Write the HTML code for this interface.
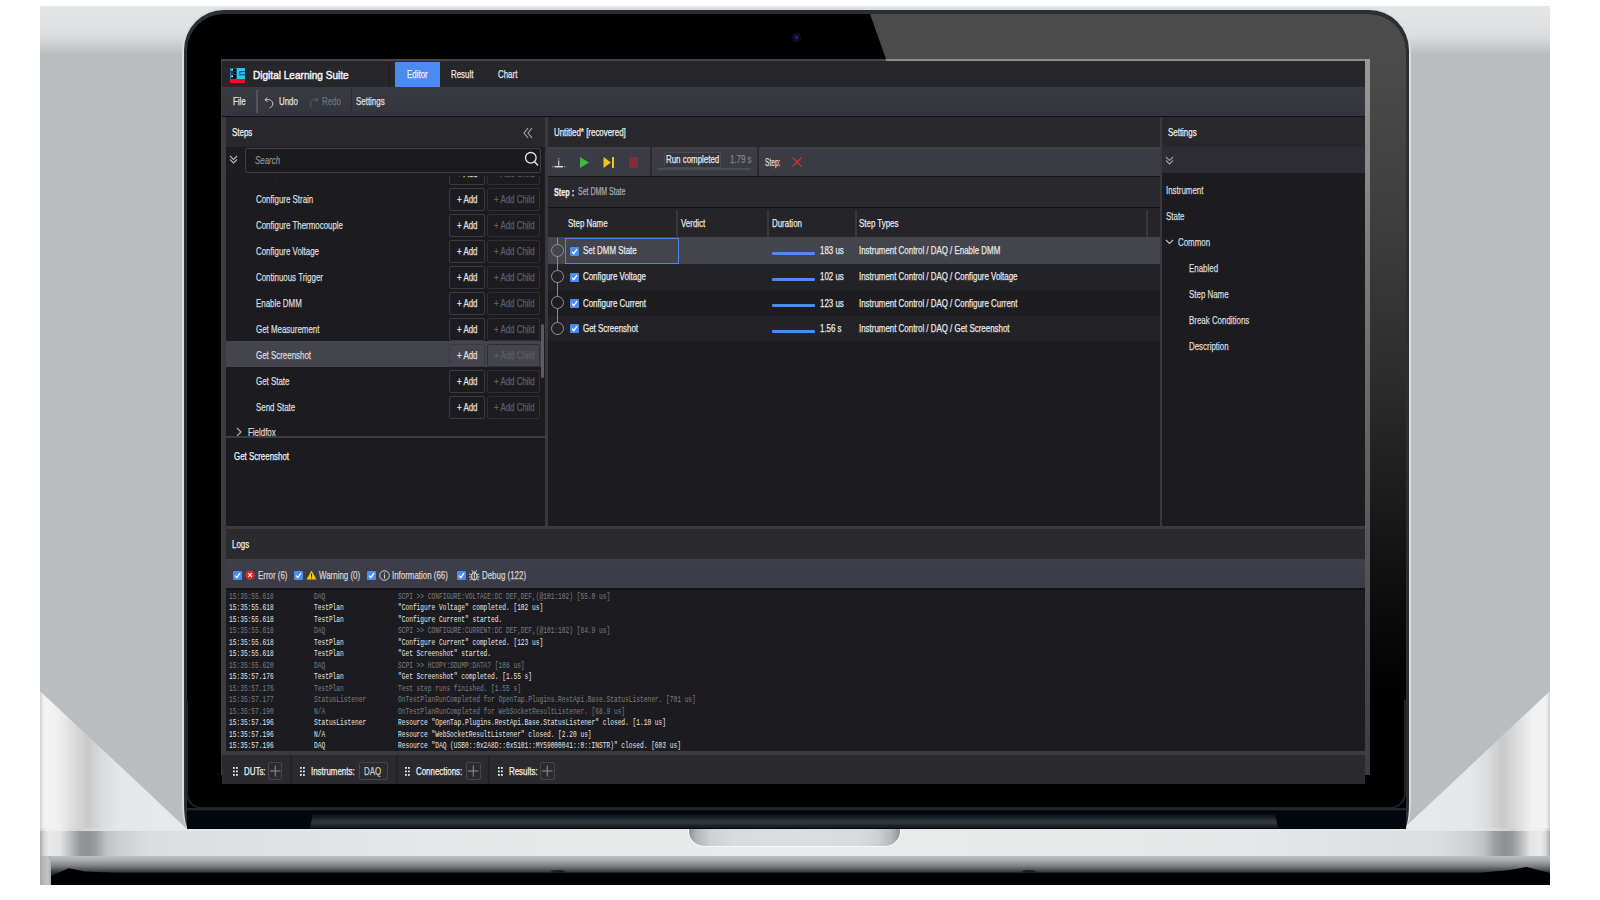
<!DOCTYPE html>
<html><head><meta charset="utf-8">
<style>
*{box-sizing:border-box;margin:0;padding:0}
html,body{width:1600px;height:900px;overflow:hidden;background:#fff;font-family:"Liberation Sans",sans-serif}
.a{position:absolute}
#bg{left:40px;top:6px;width:1510px;height:879px;background:linear-gradient(to bottom,#e4e5e5 0px,#e1e2e3 16px,#dcddde 30px,#c9cbcd 40px,#babdbf 48px,#babdbf 100%)}
#triL{left:40px;top:691px;width:147px;height:138px;clip-path:polygon(0 0,100% 100%,0 100%);background:linear-gradient(to right,#cfd0d1 0px,#f3f3f3 4px,#f0f0f0 18px,#d6d6d7 38px,#c9c9ca 48px,#dadbdc 62px,#e6e7e8 80px,#e8e9ea 100%)}
#triR{left:1403px;top:691px;width:147px;height:138px;clip-path:polygon(100% 0,100% 100%,0 100%);background:linear-gradient(to left,#cfd0d1 0px,#f3f3f3 4px,#f0f0f0 18px,#d6d6d7 38px,#c9c9ca 48px,#dadbdc 62px,#e6e7e8 80px,#e8e9ea 100%)}
#base{left:40px;top:830.5px;width:1510px;height:25.5px;background:linear-gradient(to right,#a6a8aa 0px,#d6d7d8 4px,#e9e9ea 9px,#e4e4e5 20px,#bdbfc1 30px,#949698 40px,#8e9092 47px,#9b9d9f 56px,#bfc1c3 66px,#cdcfd1 80px,#dcdddf 110px,#e6e7e8 400px,#eaebeb 800px,#e6e7e8 1200px,#dcdddf 1400px,#cdcfd1 1430px,#bfc1c3 1444px,#9b9d9f 1456px,#8e9092 1465px,#949698 1472px,#bdbfc1 1482px,#e4e4e5 1490px,#e9e9ea 1501px,#d6d7d8 1506px,#a6a8aa 1510px)}
#baseTop{left:40px;top:828px;width:1510px;height:2.5px;background:linear-gradient(to right,#c8c9ca 0px,#eeeeee 6px,#efefef 20px,#d0d0d1 38px,#e2e3e4 70px,#e6e7e8 100px,#e6e7e8 1410px,#e2e3e4 1440px,#d0d0d1 1472px,#efefef 1490px,#eeeeee 1504px,#c8c9ca 1510px)}
#base2{left:40px;top:856px;width:1510px;height:29px;background:linear-gradient(to bottom,#bfc1c3 0px,#a5a8aa 5px,#7d8083 10px,#4f5255 14px,#2a2c2e 17px,#1a1b1c 100%)}
#bstrip{left:40px;top:856px;width:11px;height:29px;background:linear-gradient(to right,#a4a6a8 0px,#b4b6b8 3px,#c2c4c6 8px,#a9abad 11px)}
#bblack{left:40px;top:856px;width:1510px;height:29px;background:#000;clip-path:polygon(11px 29px,11px 20px,28.7px 12.2px,45px 15.5px,76px 16.8px,1440px 16.8px,1470px 14px,1486.5px 11px,1510px 17px,1510px 29px)}
#notch{left:689px;top:828.5px;width:211px;height:17px;border-radius:0 0 15px 15px;background:linear-gradient(to right,#8f9194 0px,#b4b6b8 8px,#cfd0d2 22px,#dadbdd 45px,#dcdddf 50%,#dadbdd calc(100% - 45px),#cfd0d2 calc(100% - 22px),#b4b6b8 calc(100% - 8px),#8f9194 100%);box-shadow:0 1px 0 #f7f7f7,1px 0 0 #f7f7f7,-1px 0 0 #f7f7f7}
#lidEdge{left:182px;top:8px;width:1229px;height:821px;border-radius:42px 42px 7px 7px/42px 42px 28px 28px;background:#d9dde0}
#lidRing{left:184px;top:10px;width:1225px;height:819px;border-radius:40px 40px 5px 5px/40px 40px 26px 26px;background:#2b2f33}
#lid{left:187px;top:14px;width:1219px;height:815px;border-radius:37px 37px 3px 3px/37px 37px 24px 24px;background:#000;overflow:hidden}
#glare{left:683px;top:0px;width:540px;height:45px;clip-path:polygon(0 0,100% 0,100% 100%,16px 100%);background:#4b4b4b}
#rbez{left:1182px;top:45px;width:37px;height:640px;background:linear-gradient(to bottom,#4b4b4b 0%,#3e3e3e 25%,#2c2c2c 50%,#1c1c1c 68%,#0c0c0c 85%,#000 100%)}
#hinge{left:187px;top:808px;width:1219px;height:20.5px;background:linear-gradient(to bottom,#22262c 0px,#22262c 1.5px,#03070e 3px,#02060d 100%)}
#hingeRing{left:186px;top:700px;width:1220px;height:109px;border:2px solid #1e2226;border-top:none;border-radius:0 0 16px 16px}
#hingeIn{left:310px;top:814px;width:968px;height:14px;background:linear-gradient(to bottom,#060b12 0px,#1c2127 4px,#2f3439 7px,#32373c 9px,#22262c 11px,#12161c 14px);clip-path:polygon(3px 0,calc(100% - 3px) 0,100% 100%,0 100%)}
#cam{left:791px;top:32px;width:11px;height:11px;border-radius:50%;background:radial-gradient(circle,#1530b0 0,#0c2080 1.3px,#060a1c 2.5px,#0c0f15 4px,#000 5.5px)}

.t{position:absolute;white-space:pre;font-size:11px;color:#d9d9dc;transform-origin:0 50%;transform:scaleX(.72);-webkit-text-stroke:0.25px currentColor}
.r{position:absolute}
.m{position:absolute;white-space:pre;font-family:"Liberation Mono",monospace;font-size:9.5px;line-height:11.5px;transform-origin:0 50%;transform:scaleX(.653);color:#e6e6e6}
.dm{color:#7c7c80}
.btn{position:absolute;border:1px solid #3b3b40;border-radius:2px;background:#1d1d20}
.cb{position:absolute;width:9px;height:9px;background:#4a8cf2;border-radius:1px}
.cb:after{content:"";position:absolute;left:2.5px;top:0.5px;width:2.5px;height:5px;border:solid #fff;border-width:0 1.5px 1.5px 0;transform:rotate(40deg)}
</style></head><body>
<div id="bg" class="a"></div>
<div id="triL" class="a"></div>
<div id="triR" class="a"></div>
<div id="base2" class="a"></div><div id="bstrip" class="a"></div><div id="bblack" class="a"></div><div id="baseTop" class="a"></div><div class="a" style="left:551px;top:869.5px;width:14px;height:3px;border-radius:50%;background:#1a1b1d"></div><div class="a" style="left:1022px;top:869.5px;width:14px;height:3px;border-radius:50%;background:#1a1b1d"></div>
<div id="base" class="a"></div>
<div id="notch" class="a"></div>
<div id="lidEdge" class="a"></div>
<div id="lidRing" class="a"></div>
<div id="lid" class="a"><div id="glare" class="a"></div><div id="rbez" class="a"></div></div>
<div id="hingeRing" class="a"></div>
<div id="hinge" class="a"></div>
<div id="hingeIn" class="a"></div>
<div id="cam" class="a"></div>
<div class="r" style="left:221px;top:59px;width:1148px;height:716px;background:#1c1c20"></div>
<div class="r" style="left:221px;top:59px;width:665px;height:2.5px;background:#48484b"></div>
<div class="r" style="left:886px;top:59px;width:483px;height:2.5px;background:#8e8e8e"></div>
<div class="r" style="left:1365px;top:59px;width:4.5px;height:716px;background:linear-gradient(to bottom,#9a9a9a 0%,#7a7a7a 30%,#555557 70%,#3c3c3e 100%)"></div>
<div class="r" style="left:221px;top:61px;width:1.5px;height:714px;background:#3c3c40"></div>
<div class="r" style="left:222px;top:61px;width:1143px;height:26px;background:#26262b"></div>
<svg class="r" style="left:230px;top:68px" width="15" height="15" viewBox="0 0 15 15"><rect x="0" y="0" width="15" height="11" fill="#1da6d6"/><rect x="0.8" y="0.5" width="5.7" height="10.3" fill="#020a0e"/><rect x="0.8" y="3.2" width="5.7" height="0.6" fill="#0e6a88"/><rect x="0.8" y="6.3" width="5.7" height="0.6" fill="#0e6a88"/><rect x="1.2" y="1" width="1.8" height="1.5" fill="#f0f0f0"/><rect x="1.2" y="4.4" width="2.4" height="1.3" fill="#6a5a50"/><rect x="1.2" y="7.5" width="1.8" height="1.6" fill="#f0f0f0"/><rect x="7" y="0.3" width="8" height="10.7" fill="#28c8f5"/><rect x="9.6" y="3" width="5.4" height="1.2" fill="#0a5d7c"/><rect x="9.6" y="6.1" width="5.4" height="1.2" fill="#0a5d7c"/><rect x="9.3" y="3" width="1" height="4.3" fill="#0a5d7c"/><rect x="0" y="11" width="15" height="4" fill="#ff0628"/></svg>
<div class="t" style="left:253px;top:62px;height:26px;line-height:26px;font-size:11.5px;color:#f4f4f6;transform:scaleX(0.875);-webkit-text-stroke:0.45px #f4f4f6">Digital Learning Suite</div>
<div class="r" style="left:389px;top:62px;width:1px;height:25px;background:#1d1d21"></div>
<div class="r" style="left:395px;top:62px;width:45px;height:25px;background:#4a8af2"></div>
<div class="t" style="left:407px;top:61px;height:26px;line-height:26px;color:#eaf2ff;">Editor</div>
<div class="t" style="left:451px;top:61px;height:26px;line-height:26px;color:#e6e6e8;">Result</div>
<div class="t" style="left:497.5px;top:61px;height:26px;line-height:26px;color:#e6e6e8;">Chart</div>
<div class="r" style="left:222px;top:87px;width:1143px;height:29px;background:linear-gradient(to bottom,#3a3b42,#34353c)"></div>
<div class="r" style="left:222px;top:115.5px;width:1143px;height:1.5px;background:#131316"></div>
<div class="t" style="left:233px;top:87px;height:28px;line-height:28px;color:#e0e0e2;">File</div>
<div class="r" style="left:256px;top:90px;width:1.6px;height:23px;background:#55555b"></div>
<svg class="r" style="left:264px;top:96px" width="11" height="13" viewBox="0 0 11 13"><path d="M3 1.5 L1 4 L3.6 5.6 M1.2 4 C5 2.5 9 4.5 8.8 8 C8.6 10.2 7 11.5 5.5 12" stroke="#c8c8cc" stroke-width="1" fill="none"/></svg>
<div class="t" style="left:278.5px;top:87px;height:28px;line-height:28px;color:#e0e0e2;">Undo</div>
<svg class="r" style="left:308px;top:96px" width="11" height="13" viewBox="0 0 11 13"><path d="M8 1.5 L10 4 L7.4 5.6 M9.8 4 C6 2.5 2 4.5 2.2 8 C2.4 10.2 3 11.5 4.5 12" stroke="#5c5c62" stroke-width="1" fill="none"/></svg>
<div class="t" style="left:322px;top:87px;height:28px;line-height:28px;color:#707076;">Redo</div>
<div class="r" style="left:351px;top:88px;width:1px;height:27px;background:#2c2c32"></div>
<div class="t" style="left:356px;top:87px;height:28px;line-height:28px;color:#e0e0e2;">Settings</div>
<div class="r" style="left:222px;top:117px;width:4px;height:409px;background:#3d3d41"></div>
<div class="r" style="left:226px;top:117px;width:319px;height:30px;background:#27272c"></div>
<div class="t" style="left:232px;top:117px;height:30px;line-height:30px;color:#f2f2f4;">Steps</div>
<svg class="r" style="left:522px;top:127px" width="12" height="12" viewBox="0 0 12 12"><path d="M6 1 L2 6 L6 11 M10 1 L6 6 L10 11" stroke="#a8a8ae" stroke-width="1.1" fill="none"/></svg>
<div class="r" style="left:226px;top:147px;width:319px;height:28.5px;background:#1d1d21"></div>
<svg class="r" style="left:229px;top:155px" width="9" height="9" viewBox="0 0 9 9"><path d="M1 1 L4.5 4.5 L8 1 M1 4.5 L4.5 8 L8 4.5" stroke="#b8b8bc" stroke-width="1.1" fill="none"/></svg>
<div class="r" style="left:245px;top:147.5px;width:296px;height:25.5px;border:1px solid #3e3e44;border-radius:2px;background:#1b1b1e"></div>
<div class="t" style="left:255px;top:147.5px;height:25.5px;line-height:25.5px;color:#8c8c92;font-style:italic">Search</div>
<svg class="r" style="left:524px;top:151px" width="15" height="16" viewBox="0 0 15 16"><circle cx="6.8" cy="6.8" r="5.3" stroke="#e6e6e8" stroke-width="1.3" fill="none"/><path d="M10.7 10.8 L14 14.5" stroke="#e6e6e8" stroke-width="1.4"/></svg>
<div class="r" style="left:226px;top:175.5px;width:319px;height:260.5px;overflow:hidden">
<div class="r" style="left:0;top:3px;width:200px;height:10px;overflow:hidden">
<div class="t" style="left:30px;top:-19.0px;height:26px;line-height:26px;color:#dadadd;">Configure Shunt</div>
</div>
<div class="r" style="left:223px;top:-14.0px;width:36px;height:23px;border:1px solid #3a3a3f;border-radius:2px"></div>
<div class="r" style="left:261px;top:-14.0px;width:52.5px;height:23px;border:1px solid #2e2e33;border-radius:2px"></div>
<div class="t" style="left:231px;top:-14.0px;height:23px;line-height:23px;color:#e0e0e2;">+ Add</div>
<div class="t" style="left:267.5px;top:-14.0px;height:23px;line-height:23px;color:#5f5f65;">+ Add Child</div>
<div class="t" style="left:30px;top:10.0px;height:26px;line-height:26px;color:#dadadd;">Configure Strain</div>
<div class="r" style="left:223px;top:12.0px;width:36px;height:23px;border:1px solid #3a3a3f;border-radius:2px"></div>
<div class="r" style="left:261px;top:12.0px;width:52.5px;height:23px;border:1px solid #2e2e33;border-radius:2px"></div>
<div class="t" style="left:231px;top:12.0px;height:23px;line-height:23px;color:#e0e0e2;">+ Add</div>
<div class="t" style="left:267.5px;top:12.0px;height:23px;line-height:23px;color:#5f5f65;">+ Add Child</div>
<div class="t" style="left:30px;top:36.0px;height:26px;line-height:26px;color:#dadadd;">Configure Thermocouple</div>
<div class="r" style="left:223px;top:38.0px;width:36px;height:23px;border:1px solid #3a3a3f;border-radius:2px"></div>
<div class="r" style="left:261px;top:38.0px;width:52.5px;height:23px;border:1px solid #2e2e33;border-radius:2px"></div>
<div class="t" style="left:231px;top:38.0px;height:23px;line-height:23px;color:#e0e0e2;">+ Add</div>
<div class="t" style="left:267.5px;top:38.0px;height:23px;line-height:23px;color:#5f5f65;">+ Add Child</div>
<div class="t" style="left:30px;top:62.0px;height:26px;line-height:26px;color:#dadadd;">Configure Voltage</div>
<div class="r" style="left:223px;top:64.0px;width:36px;height:23px;border:1px solid #3a3a3f;border-radius:2px"></div>
<div class="r" style="left:261px;top:64.0px;width:52.5px;height:23px;border:1px solid #2e2e33;border-radius:2px"></div>
<div class="t" style="left:231px;top:64.0px;height:23px;line-height:23px;color:#e0e0e2;">+ Add</div>
<div class="t" style="left:267.5px;top:64.0px;height:23px;line-height:23px;color:#5f5f65;">+ Add Child</div>
<div class="t" style="left:30px;top:88.0px;height:26px;line-height:26px;color:#dadadd;">Continuous Trigger</div>
<div class="r" style="left:223px;top:90.0px;width:36px;height:23px;border:1px solid #3a3a3f;border-radius:2px"></div>
<div class="r" style="left:261px;top:90.0px;width:52.5px;height:23px;border:1px solid #2e2e33;border-radius:2px"></div>
<div class="t" style="left:231px;top:90.0px;height:23px;line-height:23px;color:#e0e0e2;">+ Add</div>
<div class="t" style="left:267.5px;top:90.0px;height:23px;line-height:23px;color:#5f5f65;">+ Add Child</div>
<div class="t" style="left:30px;top:114.0px;height:26px;line-height:26px;color:#dadadd;">Enable DMM</div>
<div class="r" style="left:223px;top:116.0px;width:36px;height:23px;border:1px solid #3a3a3f;border-radius:2px"></div>
<div class="r" style="left:261px;top:116.0px;width:52.5px;height:23px;border:1px solid #2e2e33;border-radius:2px"></div>
<div class="t" style="left:231px;top:116.0px;height:23px;line-height:23px;color:#e0e0e2;">+ Add</div>
<div class="t" style="left:267.5px;top:116.0px;height:23px;line-height:23px;color:#5f5f65;">+ Add Child</div>
<div class="t" style="left:30px;top:140.0px;height:26px;line-height:26px;color:#dadadd;">Get Measurement</div>
<div class="r" style="left:223px;top:142.0px;width:36px;height:23px;border:1px solid #3a3a3f;border-radius:2px"></div>
<div class="r" style="left:261px;top:142.0px;width:52.5px;height:23px;border:1px solid #2e2e33;border-radius:2px"></div>
<div class="t" style="left:231px;top:142.0px;height:23px;line-height:23px;color:#e0e0e2;">+ Add</div>
<div class="t" style="left:267.5px;top:142.0px;height:23px;line-height:23px;color:#5f5f65;">+ Add Child</div>
<div class="r" style="left:0px;top:165.5px;width:315px;height:26px;background:#44454c"></div>
<div class="t" style="left:30px;top:166.0px;height:26px;line-height:26px;color:#dadadd;">Get Screenshot</div>
<div class="r" style="left:223px;top:168.0px;width:36px;height:23px;border:1px solid #3a3a3f;border-radius:2px"></div>
<div class="r" style="left:261px;top:168.0px;width:52.5px;height:23px;border:1px solid #2e2e33;border-radius:2px"></div>
<div class="t" style="left:231px;top:168.0px;height:23px;line-height:23px;color:#e0e0e2;">+ Add</div>
<div class="t" style="left:267.5px;top:168.0px;height:23px;line-height:23px;color:#5f5f65;">+ Add Child</div>
<div class="t" style="left:30px;top:192.0px;height:26px;line-height:26px;color:#dadadd;">Get State</div>
<div class="r" style="left:223px;top:194.0px;width:36px;height:23px;border:1px solid #3a3a3f;border-radius:2px"></div>
<div class="r" style="left:261px;top:194.0px;width:52.5px;height:23px;border:1px solid #2e2e33;border-radius:2px"></div>
<div class="t" style="left:231px;top:194.0px;height:23px;line-height:23px;color:#e0e0e2;">+ Add</div>
<div class="t" style="left:267.5px;top:194.0px;height:23px;line-height:23px;color:#5f5f65;">+ Add Child</div>
<div class="t" style="left:30px;top:218.0px;height:26px;line-height:26px;color:#dadadd;">Send State</div>
<div class="r" style="left:223px;top:220.0px;width:36px;height:23px;border:1px solid #3a3a3f;border-radius:2px"></div>
<div class="r" style="left:261px;top:220.0px;width:52.5px;height:23px;border:1px solid #2e2e33;border-radius:2px"></div>
<div class="t" style="left:231px;top:220.0px;height:23px;line-height:23px;color:#e0e0e2;">+ Add</div>
<div class="t" style="left:267.5px;top:220.0px;height:23px;line-height:23px;color:#5f5f65;">+ Add Child</div>
<svg class="r" style="left:10px;top:251.5px" width="6" height="10" viewBox="0 0 6 10"><path d="M1 1 L5 5 L1 9" stroke="#b0b0b4" stroke-width="1.1" fill="none"/></svg>
<div class="t" style="left:22px;top:243.5px;height:26px;line-height:26px;color:#dadadd;">Fieldfox</div>
<div class="r" style="left:315px;top:148.5px;width:3px;height:54px;background:#5b5b61;border-radius:2px"></div>
</div>
<div class="r" style="left:226px;top:436px;width:319px;height:2px;background:#3b3b40"></div>
<div class="t" style="left:234px;top:441px;height:30px;line-height:30px;color:#f0f0f2;">Get Screenshot</div>
<div class="r" style="left:545px;top:117px;width:3px;height:409px;background:#3a3a3e"></div>
<div class="r" style="left:548px;top:117px;width:612px;height:30px;background:#27272c"></div>
<div class="t" style="left:553.5px;top:117px;height:30px;line-height:30px;color:#f0f0f2;">Untitled* [recovered]</div>
<div class="r" style="left:548px;top:147px;width:612px;height:29px;background:linear-gradient(to bottom,#41424a 0px,#3b3c45 2px,#393a42 100%)"></div>
<svg class="r" style="left:551px;top:156px" width="16" height="13" viewBox="0 0 16 13"><path d="M7.75 2 V3.6" stroke="#9a9aa0" stroke-width="1.1"/><path d="M7.75 4.6 V9.8" stroke="#d8d8dc" stroke-width="1.1"/><path d="M3.5 10.75 H12" stroke="#f0f0f2" stroke-width="1.3"/><path d="M1 10.75 H2.6 M12.9 10.75 H14.6" stroke="#a0a0a6" stroke-width="1.2"/></svg>
<svg class="r" style="left:579px;top:156px" width="11" height="13" viewBox="0 0 11 13"><path d="M1 1 L10 6.5 L1 12 Z" fill="#3cb84a"/></svg>
<svg class="r" style="left:603px;top:156px" width="12" height="13" viewBox="0 0 12 13"><path d="M0.5 1 L8 6.5 L0.5 12 Z" fill="#f2c31b"/><rect x="9" y="1" width="2" height="11" fill="#f2c31b"/></svg>
<div class="r" style="left:629.4px;top:157px;width:9px;height:11.3px;background:#7a3036"></div>
<div class="r" style="left:650px;top:147px;width:1.5px;height:29px;background:#2a2a30"></div>
<div class="r" style="left:663.5px;top:151.5px;width:57px;height:16px;border:1px solid #4a4a50;border-radius:2px;background:#34353b"></div>
<div class="t" style="left:666px;top:150.5px;height:16px;line-height:16px;color:#e8e8ea;">Run completed</div>
<div class="t" style="left:730px;top:150.5px;height:16px;line-height:16px;color:#85858a;">1.79 s</div>
<div class="r" style="left:657px;top:167.5px;width:94px;height:2.5px;background:#4b4b53;border-radius:1px"></div>
<div class="r" style="left:757px;top:147px;width:1.5px;height:29px;background:#2a2a30"></div>
<div class="t" style="left:765px;top:148px;height:29px;line-height:29px;font-size:10px;color:#dcdcde;transform:scaleX(0.66);">Step:</div>
<svg class="r" style="left:791px;top:156px" width="12" height="12" viewBox="0 0 12 12"><path d="M1.5 1.5 L10.5 10.5 M10.5 1.5 L1.5 10.5" stroke="#d23030" stroke-width="1.3"/></svg>
<div class="r" style="left:548px;top:176px;width:612px;height:1px;background:#141417"></div>
<div class="r" style="left:548px;top:177px;width:612px;height:30px;background:#28282d"></div>
<div class="t" style="left:553.5px;top:176.5px;height:30px;line-height:30px;color:#f0f0f2;font-weight:700;transform:scaleX(0.66);">Step :</div>
<div class="t" style="left:578px;top:177.5px;height:28px;line-height:28px;font-size:10px;color:#a8a8ad;transform:scaleX(0.7);">Set DMM State</div>
<div class="r" style="left:548px;top:207px;width:612px;height:1px;background:#121215"></div>
<div class="r" style="left:548px;top:208px;width:612px;height:29px;background:#252429"></div>
<div class="r" style="left:676px;top:210px;width:1.5px;height:27px;background:#38383d"></div>
<div class="r" style="left:767px;top:210px;width:1.5px;height:27px;background:#38383d"></div>
<div class="r" style="left:855px;top:210px;width:1.5px;height:27px;background:#38383d"></div>
<div class="r" style="left:1146px;top:210px;width:1.5px;height:27px;background:#38383d"></div>
<div class="t" style="left:567.6px;top:209px;height:29px;line-height:29px;color:#e6e6e8;">Step Name</div>
<div class="t" style="left:681px;top:209px;height:29px;line-height:29px;color:#e6e6e8;">Verdict</div>
<div class="t" style="left:772px;top:209px;height:29px;line-height:29px;color:#e6e6e8;">Duration</div>
<div class="t" style="left:859.4px;top:209px;height:29px;line-height:29px;color:#e6e6e8;">Step Types</div>
<div class="r" style="left:548px;top:237px;width:612px;height:27px;background:#44454c"></div>
<div class="r" style="left:548px;top:264px;width:612px;height:25.5px;background:#232327"></div>
<div class="r" style="left:548px;top:289.5px;width:612px;height:26px;background:#1d1d20"></div>
<div class="r" style="left:548px;top:315.5px;width:612px;height:25.5px;background:#232327"></div>
<div class="r" style="left:556.5px;top:238px;width:1px;height:97px;background:#8a8a90"></div>
<div class="r" style="left:550.5px;top:244.0px;width:13px;height:13px;border:1px solid #8e8e94;border-radius:50%;background:#44454c"></div>
<div class="r" style="left:570px;top:246.5px;width:9px;height:9px;background:#4a8cf2;border-radius:1px"></div>
<svg class="r" style="left:570px;top:246.5px" width="9" height="9" viewBox="0 0 9 9"><path d="M2 4.6 L3.8 6.6 L7 2.2" stroke="#fff" stroke-width="1.3" fill="none"/></svg>
<div class="t" style="left:582.8px;top:237px;height:27px;line-height:27px;color:#e8e8ea;">Set DMM State</div>
<div class="r" style="left:772px;top:252.0px;width:43px;height:3px;background:#4a8cf2;border-radius:1px"></div>
<div class="t" style="left:819.5px;top:237px;height:27px;line-height:27px;color:#e8e8ea;">183 us</div>
<div class="t" style="left:859.4px;top:237px;height:27px;line-height:27px;color:#e8e8ea;">Instrument Control / DAQ / Enable DMM</div>
<div class="r" style="left:550.5px;top:270.25px;width:13px;height:13px;border:1px solid #8e8e94;border-radius:50%;background:#232327"></div>
<div class="r" style="left:570px;top:272.75px;width:9px;height:9px;background:#4a8cf2;border-radius:1px"></div>
<svg class="r" style="left:570px;top:272.75px" width="9" height="9" viewBox="0 0 9 9"><path d="M2 4.6 L3.8 6.6 L7 2.2" stroke="#fff" stroke-width="1.3" fill="none"/></svg>
<div class="t" style="left:582.8px;top:264px;height:25.5px;line-height:25.5px;color:#e8e8ea;">Configure Voltage</div>
<div class="r" style="left:772px;top:278.25px;width:43px;height:3px;background:#4a8cf2;border-radius:1px"></div>
<div class="t" style="left:819.5px;top:264px;height:25.5px;line-height:25.5px;color:#e8e8ea;">102 us</div>
<div class="t" style="left:859.4px;top:264px;height:25.5px;line-height:25.5px;color:#e8e8ea;">Instrument Control / DAQ / Configure Voltage</div>
<div class="r" style="left:550.5px;top:296.0px;width:13px;height:13px;border:1px solid #8e8e94;border-radius:50%;background:#1d1d20"></div>
<div class="r" style="left:570px;top:298.5px;width:9px;height:9px;background:#4a8cf2;border-radius:1px"></div>
<svg class="r" style="left:570px;top:298.5px" width="9" height="9" viewBox="0 0 9 9"><path d="M2 4.6 L3.8 6.6 L7 2.2" stroke="#fff" stroke-width="1.3" fill="none"/></svg>
<div class="t" style="left:582.8px;top:289.5px;height:26px;line-height:26px;color:#e8e8ea;">Configure Current</div>
<div class="r" style="left:772px;top:304.0px;width:43px;height:3px;background:#4a8cf2;border-radius:1px"></div>
<div class="t" style="left:819.5px;top:289.5px;height:26px;line-height:26px;color:#e8e8ea;">123 us</div>
<div class="t" style="left:859.4px;top:289.5px;height:26px;line-height:26px;color:#e8e8ea;">Instrument Control / DAQ / Configure Current</div>
<div class="r" style="left:550.5px;top:321.75px;width:13px;height:13px;border:1px solid #8e8e94;border-radius:50%;background:#232327"></div>
<div class="r" style="left:570px;top:324.25px;width:9px;height:9px;background:#4a8cf2;border-radius:1px"></div>
<svg class="r" style="left:570px;top:324.25px" width="9" height="9" viewBox="0 0 9 9"><path d="M2 4.6 L3.8 6.6 L7 2.2" stroke="#fff" stroke-width="1.3" fill="none"/></svg>
<div class="t" style="left:582.8px;top:315.5px;height:25.5px;line-height:25.5px;color:#e8e8ea;">Get Screenshot</div>
<div class="r" style="left:772px;top:329.75px;width:43px;height:3px;background:#4a8cf2;border-radius:1px"></div>
<div class="t" style="left:819.5px;top:315.5px;height:25.5px;line-height:25.5px;color:#e8e8ea;">1.56 s</div>
<div class="t" style="left:859.4px;top:315.5px;height:25.5px;line-height:25.5px;color:#e8e8ea;">Instrument Control / DAQ / Get Screenshot</div>
<div class="r" style="left:565px;top:238px;width:114px;height:26px;border:1px solid #4a88e8"></div>
<div class="r" style="left:1160px;top:117px;width:2px;height:409px;background:#3a3a3e"></div>
<div class="r" style="left:1162px;top:117px;width:203px;height:30px;background:#27272c"></div>
<div class="t" style="left:1168px;top:117px;height:30px;line-height:30px;color:#f0f0f2;">Settings</div>
<div class="r" style="left:1162px;top:147px;width:203px;height:26px;background:#2c2c32"></div>
<svg class="r" style="left:1165px;top:156px" width="9" height="9" viewBox="0 0 9 9"><path d="M1 1 L4.5 4.5 L8 1 M1 4.5 L4.5 8 L8 4.5" stroke="#9a9aa0" stroke-width="1.1" fill="none"/></svg>
<div class="t" style="left:1166px;top:177px;height:26px;line-height:26px;color:#dadadd;">Instrument</div>
<div class="t" style="left:1166px;top:203px;height:26px;line-height:26px;color:#dadadd;">State</div>
<div class="t" style="left:1178px;top:229px;height:26px;line-height:26px;color:#dadadd;">Common</div>
<div class="t" style="left:1189px;top:255px;height:26px;line-height:26px;color:#dadadd;">Enabled</div>
<div class="t" style="left:1189px;top:281px;height:26px;line-height:26px;color:#dadadd;">Step Name</div>
<div class="t" style="left:1189px;top:307px;height:26px;line-height:26px;color:#dadadd;">Break Conditions</div>
<div class="t" style="left:1189px;top:333px;height:26px;line-height:26px;color:#dadadd;">Description</div>
<svg class="r" style="left:1165px;top:239px" width="9" height="6" viewBox="0 0 9 6"><path d="M1 1 L4.5 4.5 L8 1" stroke="#c0c0c4" stroke-width="1.1" fill="none"/></svg>
<div class="r" style="left:222px;top:526px;width:1143px;height:3px;background:#3a3a3e"></div>
<div class="r" style="left:222px;top:529px;width:4px;height:226px;background:#3d3d41"></div>
<div class="r" style="left:226px;top:529px;width:1139px;height:29.5px;background:#2a2a2f"></div>
<div class="t" style="left:232px;top:530px;height:29px;line-height:29px;color:#f0f0f2;">Logs</div>
<div class="r" style="left:226px;top:558.5px;width:1139px;height:29px;background:linear-gradient(to bottom,#3e3f48,#3a3b44)"></div>
<div class="r" style="left:226px;top:587.5px;width:1139px;height:2px;background:#141417"></div>
<div class="r" style="left:233px;top:570.5px;width:9px;height:9px;background:#4a8cf2;border-radius:1px"></div>
<svg class="r" style="left:233px;top:570.5px" width="9" height="9" viewBox="0 0 9 9"><path d="M2 4.6 L3.8 6.6 L7 2.2" stroke="#fff" stroke-width="1.3" fill="none"/></svg>
<div class="r" style="left:294px;top:570.5px;width:9px;height:9px;background:#4a8cf2;border-radius:1px"></div>
<svg class="r" style="left:294px;top:570.5px" width="9" height="9" viewBox="0 0 9 9"><path d="M2 4.6 L3.8 6.6 L7 2.2" stroke="#fff" stroke-width="1.3" fill="none"/></svg>
<div class="r" style="left:367px;top:570.5px;width:9px;height:9px;background:#4a8cf2;border-radius:1px"></div>
<svg class="r" style="left:367px;top:570.5px" width="9" height="9" viewBox="0 0 9 9"><path d="M2 4.6 L3.8 6.6 L7 2.2" stroke="#fff" stroke-width="1.3" fill="none"/></svg>
<div class="r" style="left:457px;top:570.5px;width:9px;height:9px;background:#4a8cf2;border-radius:1px"></div>
<svg class="r" style="left:457px;top:570.5px" width="9" height="9" viewBox="0 0 9 9"><path d="M2 4.6 L3.8 6.6 L7 2.2" stroke="#fff" stroke-width="1.3" fill="none"/></svg>
<svg class="r" style="left:245px;top:570px" width="10" height="10" viewBox="0 0 10 10"><circle cx="5" cy="5" r="4.6" fill="#e8262c"/><path d="M3.2 3.2 L6.8 6.8 M6.8 3.2 L3.2 6.8" stroke="#fff" stroke-width="1.1"/></svg>
<div class="t" style="left:258px;top:559.5px;height:31px;line-height:31px;color:#d4d4d8;">Error (6)</div>
<svg class="r" style="left:306px;top:570px" width="11" height="10" viewBox="0 0 11 10"><path d="M5.5 0.5 L10.5 9.5 L0.5 9.5 Z" fill="#f5c518"/><path d="M5.5 3.5 V6.8 M5.5 7.6 V8.6" stroke="#222" stroke-width="1"/></svg>
<div class="t" style="left:319px;top:559.5px;height:31px;line-height:31px;color:#d4d4d8;">Warning (0)</div>
<svg class="r" style="left:379px;top:569.5px" width="11" height="11" viewBox="0 0 11 11"><circle cx="5.5" cy="5.5" r="4.8" stroke="#d0d0d4" stroke-width="1" fill="none"/><path d="M5.5 4.5 V8.5 M5.5 2.6 V3.6" stroke="#d0d0d4" stroke-width="1.1"/></svg>
<div class="t" style="left:392px;top:559.5px;height:31px;line-height:31px;color:#d4d4d8;">Information (66)</div>
<svg class="r" style="left:468px;top:568.5px" width="12" height="13" viewBox="0 0 12 13"><ellipse cx="6.3" cy="7.3" rx="2.6" ry="3.6" stroke="#d0d0d4" stroke-width="1.1" fill="none"/><path d="M4.6 3.6 Q6.3 1.8 8 3.6 M6.3 4 V11 M1.2 5 L3.8 6 M1 8 H3.6 M1.6 11.2 L3.9 9.6 M11.4 5 L8.8 6 M11.6 8 H9 M11 11.2 L8.7 9.6 M3.8 1.2 L5 2.8 M8.8 1.2 L7.6 2.8" stroke="#d0d0d4" stroke-width="1" fill="none"/></svg>
<div class="t" style="left:482px;top:559.5px;height:31px;line-height:31px;color:#d4d4d8;">Debug (122)</div>
<div class="r" style="left:226px;top:589.5px;width:1139px;height:161.5px;background:#1c1c20"></div>
<div class="m dm" style="left:229.4px;top:590.85px">15:35:55.618</div>
<div class="m dm" style="left:313.7px;top:590.85px">DAQ</div>
<div class="m dm" style="left:398px;top:590.85px">SCPI &gt;&gt; CONFIGURE:VOLTAGE:DC DEF,DEF,(@101:102) [55.0 us]</div>
<div class="m" style="left:229.4px;top:602.35px">15:35:55.618</div>
<div class="m" style="left:313.7px;top:602.35px">TestPlan</div>
<div class="m" style="left:398px;top:602.35px">&quot;Configure Voltage&quot; completed. [102 us]</div>
<div class="m" style="left:229.4px;top:613.85px">15:35:55.618</div>
<div class="m" style="left:313.7px;top:613.85px">TestPlan</div>
<div class="m" style="left:398px;top:613.85px">&quot;Configure Current&quot; started.</div>
<div class="m dm" style="left:229.4px;top:625.35px">15:35:55.618</div>
<div class="m dm" style="left:313.7px;top:625.35px">DAQ</div>
<div class="m dm" style="left:398px;top:625.35px">SCPI &gt;&gt; CONFIGURE:CURRENT:DC DEF,DEF,(@101:102) [84.9 us]</div>
<div class="m" style="left:229.4px;top:636.85px">15:35:55.618</div>
<div class="m" style="left:313.7px;top:636.85px">TestPlan</div>
<div class="m" style="left:398px;top:636.85px">&quot;Configure Current&quot; completed. [123 us]</div>
<div class="m" style="left:229.4px;top:648.35px">15:35:55.618</div>
<div class="m" style="left:313.7px;top:648.35px">TestPlan</div>
<div class="m" style="left:398px;top:648.35px">&quot;Get Screenshot&quot; started.</div>
<div class="m dm" style="left:229.4px;top:659.85px">15:35:55.620</div>
<div class="m dm" style="left:313.7px;top:659.85px">DAQ</div>
<div class="m dm" style="left:398px;top:659.85px">SCPI &gt;&gt; HCOPY:SDUMP:DATA? [108 us]</div>
<div class="m" style="left:229.4px;top:671.35px">15:35:57.176</div>
<div class="m" style="left:313.7px;top:671.35px">TestPlan</div>
<div class="m" style="left:398px;top:671.35px">&quot;Get Screenshot&quot; completed. [1.55 s]</div>
<div class="m dm" style="left:229.4px;top:682.85px">15:35:57.176</div>
<div class="m dm" style="left:313.7px;top:682.85px">TestPlan</div>
<div class="m dm" style="left:398px;top:682.85px">Test step runs finished. [1.55 s]</div>
<div class="m dm" style="left:229.4px;top:694.35px">15:35:57.177</div>
<div class="m dm" style="left:313.7px;top:694.35px">StatusListener</div>
<div class="m dm" style="left:398px;top:694.35px">OnTestPlanRunCompleted for OpenTap.Plugins.RestApi.Base.StatusListener. [701 us]</div>
<div class="m dm" style="left:229.4px;top:705.85px">15:35:57.190</div>
<div class="m dm" style="left:313.7px;top:705.85px">N/A</div>
<div class="m dm" style="left:398px;top:705.85px">OnTestPlanRunCompleted for WebSocketResultListener. [68.9 us]</div>
<div class="m" style="left:229.4px;top:717.35px">15:35:57.196</div>
<div class="m" style="left:313.7px;top:717.35px">StatusListener</div>
<div class="m" style="left:398px;top:717.35px">Resource &quot;OpenTap.Plugins.RestApi.Base.StatusListener&quot; closed. [1.10 us]</div>
<div class="m" style="left:229.4px;top:728.85px">15:35:57.196</div>
<div class="m" style="left:313.7px;top:728.85px">N/A</div>
<div class="m" style="left:398px;top:728.85px">Resource &quot;WebSocketResultListener&quot; closed. [2.20 us]</div>
<div class="m" style="left:229.4px;top:740.35px">15:35:57.196</div>
<div class="m" style="left:313.7px;top:740.35px">DAQ</div>
<div class="m" style="left:398px;top:740.35px">Resource &quot;DAQ (USB0::0x2A8D::0x5101::MY59000041::0::INSTR)&quot; closed. [603 us]</div>
<div class="r" style="left:226px;top:751px;width:1139px;height:4px;background:#3c3c40"></div>
<div class="r" style="left:222px;top:755px;width:1143px;height:29px;background:#2a2a2f"></div>
<div class="r" style="left:290px;top:755px;width:2px;height:29px;background:#232327"></div>
<div class="r" style="left:396px;top:755px;width:2px;height:29px;background:#232327"></div>
<div class="r" style="left:488px;top:755px;width:2px;height:29px;background:#232327"></div>
<svg class="r" style="left:232px;top:766px" width="7" height="11" viewBox="0 0 7 11"><rect x="1" y="1" width="1.8" height="1.8" fill="#e8e8ea"/><rect x="1" y="4.5" width="1.8" height="1.8" fill="#e8e8ea"/><rect x="1" y="8" width="1.8" height="1.8" fill="#e8e8ea"/><rect x="4" y="1" width="1.8" height="1.8" fill="#e8e8ea"/><rect x="4" y="4.5" width="1.8" height="1.8" fill="#e8e8ea"/><rect x="4" y="8" width="1.8" height="1.8" fill="#e8e8ea"/></svg>
<div class="t" style="left:244px;top:757px;height:29px;line-height:29px;color:#f0f0f2;">DUTs:</div>
<div class="r" style="left:267.5px;top:762px;width:14.5px;height:18px;border:1px solid #45454b;border-radius:2px"></div>
<svg class="r" style="left:267.5px;top:762px" width="14.5" height="18" viewBox="0 0 14.5 18"><path d="M7.25 3.5 V14.5 M2 9 H12.5" stroke="#8e8e94" stroke-width="1"/></svg>
<svg class="r" style="left:299px;top:766px" width="7" height="11" viewBox="0 0 7 11"><rect x="1" y="1" width="1.8" height="1.8" fill="#e8e8ea"/><rect x="1" y="4.5" width="1.8" height="1.8" fill="#e8e8ea"/><rect x="1" y="8" width="1.8" height="1.8" fill="#e8e8ea"/><rect x="4" y="1" width="1.8" height="1.8" fill="#e8e8ea"/><rect x="4" y="4.5" width="1.8" height="1.8" fill="#e8e8ea"/><rect x="4" y="8" width="1.8" height="1.8" fill="#e8e8ea"/></svg>
<div class="t" style="left:311px;top:757px;height:29px;line-height:29px;color:#f0f0f2;">Instruments:</div>
<div class="r" style="left:359px;top:762px;width:28.5px;height:18px;border:1px solid #45454b;border-radius:2px"></div>
<div class="t" style="left:364px;top:762px;height:18px;line-height:18px;color:#c8c8cc;">DAQ</div>
<svg class="r" style="left:404px;top:766px" width="7" height="11" viewBox="0 0 7 11"><rect x="1" y="1" width="1.8" height="1.8" fill="#e8e8ea"/><rect x="1" y="4.5" width="1.8" height="1.8" fill="#e8e8ea"/><rect x="1" y="8" width="1.8" height="1.8" fill="#e8e8ea"/><rect x="4" y="1" width="1.8" height="1.8" fill="#e8e8ea"/><rect x="4" y="4.5" width="1.8" height="1.8" fill="#e8e8ea"/><rect x="4" y="8" width="1.8" height="1.8" fill="#e8e8ea"/></svg>
<div class="t" style="left:416px;top:757px;height:29px;line-height:29px;color:#f0f0f2;">Connections:</div>
<div class="r" style="left:466px;top:762px;width:14.5px;height:18px;border:1px solid #45454b;border-radius:2px"></div>
<svg class="r" style="left:466px;top:762px" width="14.5" height="18" viewBox="0 0 14.5 18"><path d="M7.25 3.5 V14.5 M2 9 H12.5" stroke="#8e8e94" stroke-width="1"/></svg>
<svg class="r" style="left:497px;top:766px" width="7" height="11" viewBox="0 0 7 11"><rect x="1" y="1" width="1.8" height="1.8" fill="#e8e8ea"/><rect x="1" y="4.5" width="1.8" height="1.8" fill="#e8e8ea"/><rect x="1" y="8" width="1.8" height="1.8" fill="#e8e8ea"/><rect x="4" y="1" width="1.8" height="1.8" fill="#e8e8ea"/><rect x="4" y="4.5" width="1.8" height="1.8" fill="#e8e8ea"/><rect x="4" y="8" width="1.8" height="1.8" fill="#e8e8ea"/></svg>
<div class="t" style="left:509px;top:757px;height:29px;line-height:29px;color:#f0f0f2;">Results:</div>
<div class="r" style="left:540px;top:762px;width:14.5px;height:18px;border:1px solid #45454b;border-radius:2px"></div>
<svg class="r" style="left:540px;top:762px" width="14.5" height="18" viewBox="0 0 14.5 18"><path d="M7.25 3.5 V14.5 M2 9 H12.5" stroke="#8e8e94" stroke-width="1"/></svg>
</body></html>
